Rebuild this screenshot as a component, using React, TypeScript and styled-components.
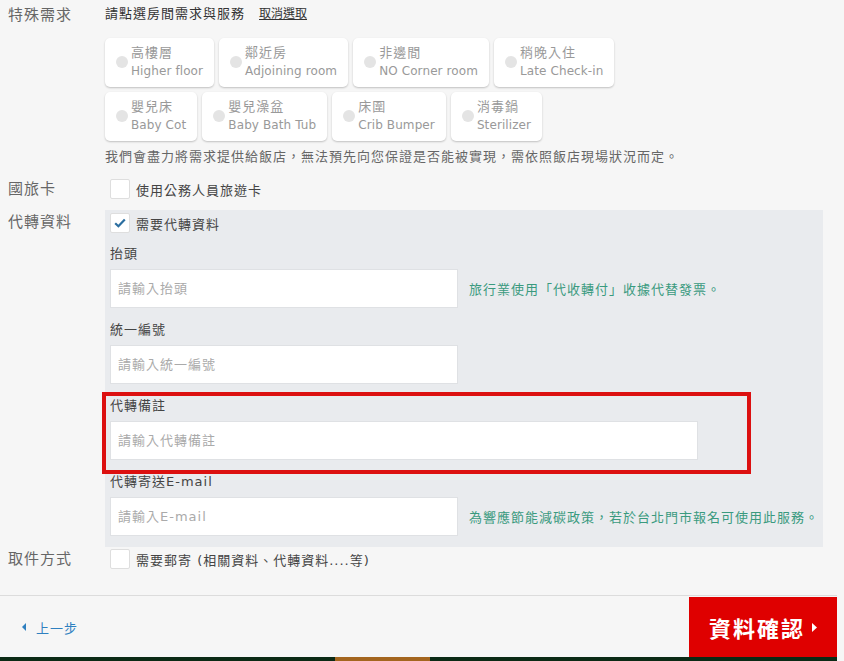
import React, { FC } from 'react';
import styled, { createGlobalStyle } from 'styled-components';

const GlobalStyle = createGlobalStyle`
  body {
    margin: 0;
    background: #f6f6f6;
    font-family: "DejaVu Sans", "Noto Sans CJK TC", sans-serif;
    color: #444;
  }
`;

const Page = styled.div`
  width: 837px;
  background: #f6f6f6;
`;

const Form = styled.div`
  padding: 4px 0 26px 0;
`;

const Row = styled.div<{ $top?: number }>`
  display: grid;
  grid-template-columns: 105px 1fr;
  margin-top: ${p => p.$top ?? 0}px;
`;

const RowLabel = styled.div<{ $lh?: number; $pt?: number }>`
  padding-left: 8px;
  padding-top: ${p => p.$pt ?? 0}px;
  font-size: 15px;
  letter-spacing: 1px;
  line-height: ${p => p.$lh ?? 20}px;
  color: #666;
`;

const Hint = styled.div`
  font-size: 13px;
  line-height: 20px;
  letter-spacing: 1px;
  color: #333;
`;

const ClearLink = styled.a`
  margin-left: 14px;
  font-size: 12px;
  letter-spacing: 0;
  color: #333;
  text-decoration: underline;
  cursor: pointer;
`;

const ChipGrid = styled.div`
  display: flex;
  flex-direction: column;
  gap: 5px;
  margin-top: 14px;
`;

const ChipRow = styled.div`
  display: flex;
  gap: 5px;
`;

const Chip = styled.div`
  display: flex;
  align-items: center;
  padding: 5px 11px 6px 11px;
  background: #fff;
  border-radius: 5px;
  box-shadow: 0 1px 2px rgba(0, 0, 0, 0.22);
  color: #999;
`;

const Dot = styled.span`
  width: 12px;
  height: 12px;
  border-radius: 50%;
  background: #e4e4e4;
  margin-right: 3px;
  flex: none;
`;

const ChipText = styled.div`
  display: flex;
  flex-direction: column;
`;

const ChipZh = styled.span`
  font-size: 13px;
  letter-spacing: 1px;
  line-height: 19px;
`;

const ChipEn = styled.span`
  font-size: 12px;
  letter-spacing: 0.1px;
  line-height: 19px;
  white-space: nowrap;
`;

const Note = styled.div`
  margin-top: 6px;
  font-size: 13px;
  line-height: 20px;
  letter-spacing: 1px;
  color: #666;
`;

const CheckRow = styled.label`
  display: flex;
  align-items: center;
  gap: 6px;
  height: 20px;
  padding-left: 5px;
  font-size: 13px;
  letter-spacing: 1px;
  color: #444;
`;

const Box = styled.span`
  width: 20px;
  height: 20px;
  box-sizing: border-box;
  background: #fff;
  border: 1px solid #dedede;
  border-radius: 2px;
  display: flex;
  align-items: center;
  justify-content: center;
  flex: none;
`;

const Panel = styled.div`
  width: 718px;
  box-sizing: border-box;
  background: #e9ebee;
  padding: 3px 0 11px 0;
`;

const Field = styled.div<{ $marked?: boolean }>`
  position: relative;
  padding-left: 5px;
  margin-top: 12px;

  &:first-of-type {
    margin-top: 11px;
  }

  ${p =>
    p.$marked &&
    `
    &::after {
      content: '';
      position: absolute;
      top: -4px;
      left: -3px;
      width: 649px;
      height: 82px;
      box-sizing: border-box;
      border: 4px solid #dc1010;
      pointer-events: none;
    }
  `}
`;

const FieldLabel = styled.div`
  font-size: 13px;
  line-height: 20px;
  letter-spacing: 1px;
  color: #444;
`;

const FieldLine = styled.div`
  display: flex;
  align-items: center;
  gap: 11px;
  margin-top: 5px;
`;

const Input = styled.input<{ $w: number }>`
  width: ${p => p.$w}px;
  height: 39px;
  box-sizing: border-box;
  border: 1px solid #dfe1e4;
  background: #fff;
  padding: 0 7px;
  font-family: "DejaVu Sans", "Noto Sans CJK TC", sans-serif;
  font-size: 13px;
  letter-spacing: 1px;
  outline: none;

  &::placeholder {
    color: #aaa;
  }
`;

const GreenHint = styled.span`
  font-size: 13px;
  letter-spacing: 1px;
  color: #3a9a7e;
  white-space: nowrap;
`;

const Footer = styled.div`
  display: flex;
  align-items: center;
  justify-content: space-between;
  border-top: 1px solid #dcdcdc;
  padding: 1px 0 0 22px;
`;

const BackLink = styled.a`
  display: flex;
  align-items: center;
  gap: 10px;
  font-size: 13px;
  letter-spacing: 1px;
  color: #2f80c0;
  cursor: pointer;
`;

const ConfirmButton = styled.button`
  width: 148px;
  height: 60px;
  border: none;
  background: #df0000;
  color: #fff;
  font-family: "DejaVu Sans", "Noto Sans CJK TC", sans-serif;
  font-size: 22px;
  font-weight: bold;
  letter-spacing: 2px;
  display: flex;
  align-items: center;
  gap: 7px;
  padding: 0 0 0 20px;
  cursor: pointer;
`;

const BottomStrip = styled.div`
  height: 20px;
  background: #0b2a15;
  display: flex;
`;

const Accent = styled.div`
  margin-left: 335px;
  width: 95px;
  background: #a4661f;
`;

const chipRows = [
  [
    ['高樓層', 'Higher floor'],
    ['鄰近房', 'Adjoining room'],
    ['非邊間', 'NO Corner room'],
    ['稍晚入住', 'Late Check-in'],
  ],
  [
    ['嬰兒床', 'Baby Cot'],
    ['嬰兒澡盆', 'Baby Bath Tub'],
    ['床圍', 'Crib Bumper'],
    ['消毒鍋', 'Sterilizer'],
  ],
];

const Check: FC<{ checked?: boolean }> = ({ checked }) => (
  <Box>
    {checked && (
      <svg width="12" height="10" viewBox="0 0 12 10">
        <path d="M1.2 5.2 L4.4 8.2 L10.8 1.4" fill="none" stroke="#2b6ea0" strokeWidth="2.2" />
      </svg>
    )}
  </Box>
);

const App: FC = () => {
  return (
    <Page>
      <GlobalStyle />
      <Form>
        <Row>
          <RowLabel $lh={22}>特殊需求</RowLabel>
          <div>
            <Hint>
              請點選房間需求與服務
              <ClearLink>取消選取</ClearLink>
            </Hint>
            <ChipGrid>
              {chipRows.map((row, r) => (
                <ChipRow key={r}>
                  {row.map(([zh, en]) => (
                    <Chip key={en}>
                      <Dot />
                      <ChipText>
                        <ChipZh>{zh}</ChipZh>
                        <ChipEn>{en}</ChipEn>
                      </ChipText>
                    </Chip>
                  ))}
                </ChipRow>
              ))}
            </ChipGrid>
            <Note>我們會盡力將需求提供給飯店，無法預先向您保證是否能被實現，需依照飯店現場狀況而定。</Note>
          </div>
        </Row>

        <Row $top={12}>
          <RowLabel>國旅卡</RowLabel>
          <CheckRow>
            <Check />
            使用公務人員旅遊卡
          </CheckRow>
        </Row>

        <Row $top={11}>
          <RowLabel $lh={22} $pt={1}>代轉資料</RowLabel>
          <Panel>
            <CheckRow>
              <Check checked />
              需要代轉資料
            </CheckRow>
            <Field>
              <FieldLabel>抬頭</FieldLabel>
              <FieldLine>
                <Input $w={348} placeholder="請輸入抬頭" />
                <GreenHint>旅行業使用「代收轉付」收據代替發票。</GreenHint>
              </FieldLine>
            </Field>
            <Field>
              <FieldLabel>統一編號</FieldLabel>
              <FieldLine>
                <Input $w={348} placeholder="請輸入統一編號" />
              </FieldLine>
            </Field>
            <Field $marked>
              <FieldLabel>代轉備註</FieldLabel>
              <FieldLine>
                <Input $w={588} placeholder="請輸入代轉備註" />
              </FieldLine>
            </Field>
            <Field>
              <FieldLabel>代轉寄送E-mail</FieldLabel>
              <FieldLine>
                <Input $w={348} placeholder="請輸入E-mail" />
                <GreenHint>為響應節能減碳政策，若於台北門市報名可使用此服務。</GreenHint>
              </FieldLine>
            </Field>
          </Panel>
        </Row>

        <Row $top={2}>
          <RowLabel>取件方式</RowLabel>
          <CheckRow>
            <Check />
            需要郵寄 (相關資料、代轉資料....等)
          </CheckRow>
        </Row>
      </Form>

      <Footer>
        <BackLink>
          <svg width="4" height="8" viewBox="0 0 4 8">
            <path d="M4 0 L0 4 L4 8 Z" fill="#2f80c0" />
          </svg>
          上一步
        </BackLink>
        <ConfirmButton>
          資料確認
          <svg width="5" height="9" viewBox="0 0 5 9">
            <path d="M0 0 L5 4.5 L0 9 Z" fill="#fff" />
          </svg>
        </ConfirmButton>
      </Footer>
      <BottomStrip>
        <Accent />
      </BottomStrip>
    </Page>
  );
};

export default App;
